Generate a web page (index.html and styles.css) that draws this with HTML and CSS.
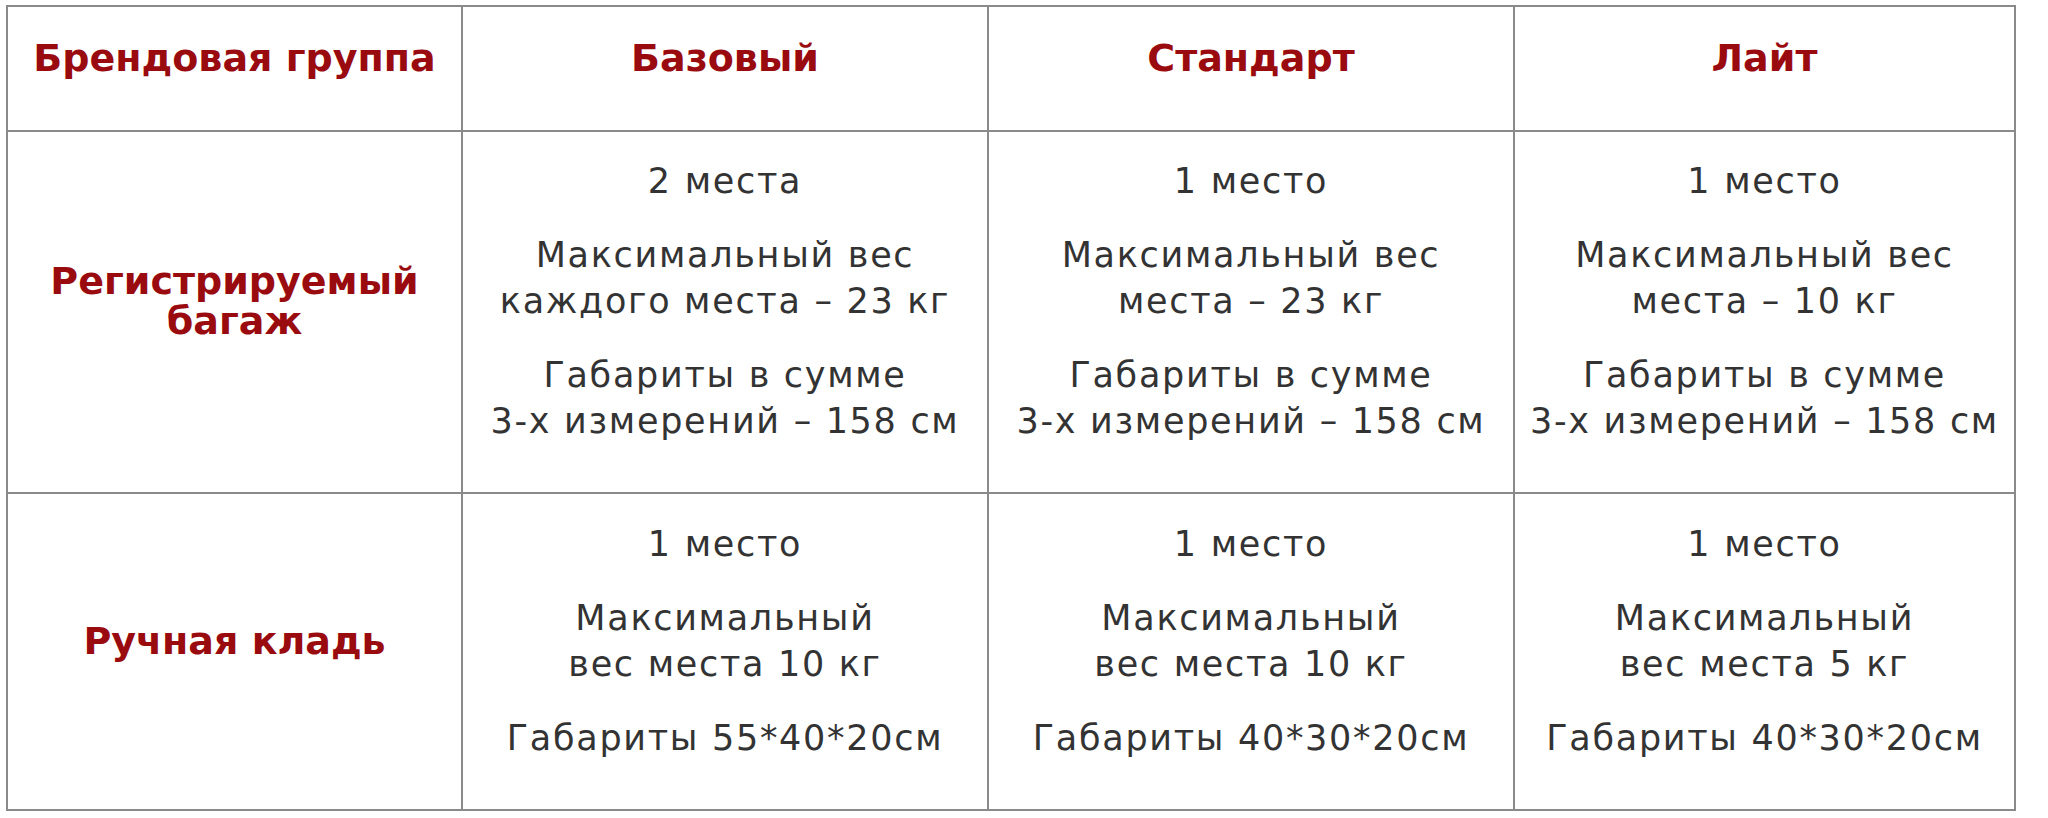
FILE: index.html
```html
<!DOCTYPE html>
<html lang="ru">
<head>
<meta charset="utf-8">
<title>Багаж</title>
<link rel="stylesheet" href="styles.css">
</head>
<body>
<table class="tariffs">
  <colgroup>
    <col class="c1">
    <col class="c2">
    <col class="c3">
    <col class="c4">
  </colgroup>
  <tr class="head">
    <th>Брендовая группа</th>
    <th>Базовый</th>
    <th>Стандарт</th>
    <th>Лайт</th>
  </tr>
  <tr class="r1">
    <th>Регистрируемый<br>багаж</th>
    <td><p>2 места</p><p>Максимальный вес<br>каждого места – 23 кг</p><p>Габариты в сумме<br>3-х измерений – 158 см</p></td>
    <td><p>1 место</p><p>Максимальный вес<br>места – 23 кг</p><p>Габариты в сумме<br>3-х измерений – 158 см</p></td>
    <td><p>1 место</p><p>Максимальный вес<br>места – 10 кг</p><p>Габариты в сумме<br>3-х измерений – 158 см</p></td>
  </tr>
  <tr class="r2">
    <th>Ручная кладь</th>
    <td><p>1 место</p><p>Максимальный<br>вес места 10 кг</p><p>Габариты 55*40*20см</p></td>
    <td><p>1 место</p><p>Максимальный<br>вес места 10 кг</p><p>Габариты 40*30*20см</p></td>
    <td><p>1 место</p><p>Максимальный<br>вес места 5 кг</p><p>Габариты 40*30*20см</p></td>
  </tr>
</table>
</body>
</html>
```
FILE: styles.css
```css
html, body {
  margin: 0;
  padding: 0;
  background: #ffffff;
}
body {
  padding: 5px 0 0 6px;
}
.tariffs {
  border-collapse: collapse;
  table-layout: fixed;
  width: 2008px;
  border: 2px solid #3a3a3a;
  font-family: "DejaVu Sans", Verdana, sans-serif;
}
.c1 { width: 455px; }
.c2 { width: 526px; }
.c3 { width: 526px; }
.c4 { width: 501px; }
.tariffs th,
.tariffs td {
  border: 2px solid #8a8a8a;
  text-align: center;
  vertical-align: middle;
  padding: 0 0 22px 0;
}
.tariffs th {
  color: #9a0b10;
  font-weight: bold;
  font-size: 38px;
  line-height: 40px;
}
.tariffs td {
  color: #333333;
  font-size: 35px;
  letter-spacing: 1.7px;
  line-height: 46px;
}
.tariffs td p {
  margin: 0;
}
.tariffs td p + p {
  margin-top: 28px;
}
.head { height: 125px; }
.r1 { height: 362px; }
.r2 { height: 317px; }
```
